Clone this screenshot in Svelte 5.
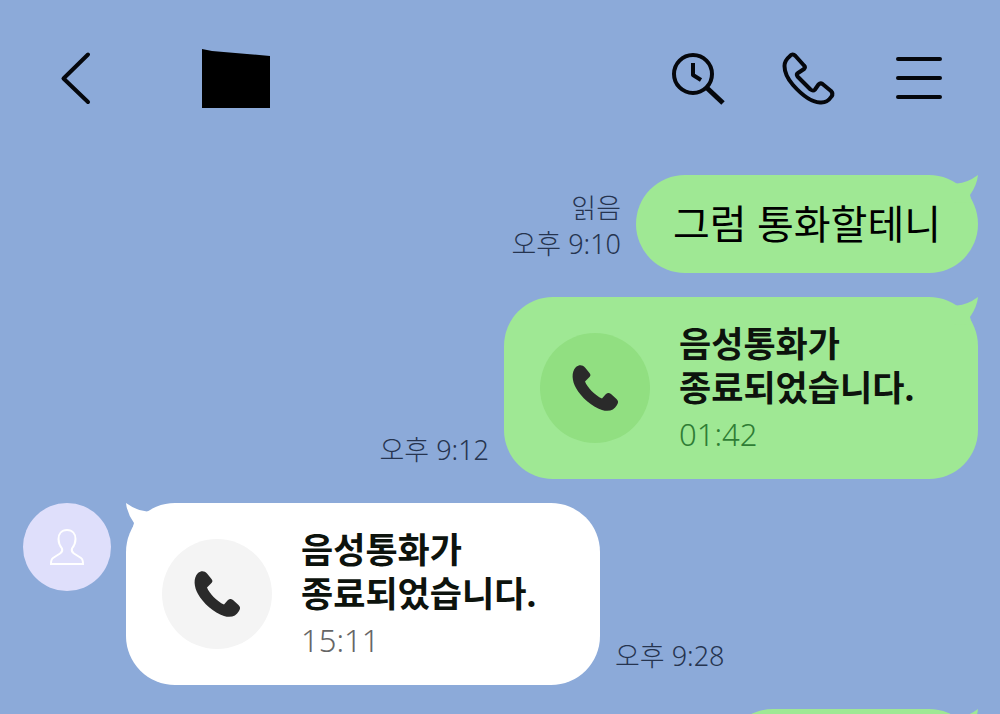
<script>
  const messages = [
    { id: 1, mine: true, kind: "text", text: "그럼 통화할테니", read: true, time: "오후 9:10" },
    { id: 2, mine: true, kind: "call", duration: "01:42", time: "오후 9:12" },
    { id: 3, mine: false, kind: "call", duration: "15:11", time: "오후 9:28" },
    { id: 4, mine: true, kind: "text", text: "", time: "" },
  ];
</script>

<div class="chat">
  <header>
    <button class="back" aria-label="뒤로">
      <svg width="32" height="56" viewBox="0 0 32 56">
        <path d="M28 4.500L3.500 28.500L28 52" />
      </svg>
    </button>
    <!-- the contact name is blacked out -->
    <svg class="redacted" width="69" height="59" viewBox="0 0 69 59" aria-hidden="true">
      <path d="M1 0L11 2L46 5L69 7V59H1Z" />
    </svg>
    <nav>
      <button aria-label="검색">
        <svg width="56" height="56" viewBox="0 0 56 56">
          <circle cx="22" cy="24" r="19" />
          <path d="M36 38L52 53" stroke-width="5" stroke-linecap="butt" />
          <path d="M22 13V25L30 30" stroke-width="4" stroke-linecap="butt" />
        </svg>
      </button>
      <button aria-label="통화">
        <svg width="56" height="56" viewBox="0 0 56 56">
          <path
            d="M8.500 6.500C10.500 4 12.500 4 14.500 6L23 15.500C24.500 17 24 18 23 19L17 23C15.500 24 15.500 25 16.500 26.500L29.500 39.500C31.500 41 32.500 41 34 39.500L37.500 34.500C39 33 40 33 41.500 34L50 41C52 43 52 44.500 50.500 46.500C47.500 51 44 53 39 52.500C30 52 20 44 12 35C6 28 3.500 22 3.500 16C3.500 12 5.500 9 8.500 6.500Z"
          />
        </svg>
      </button>
      <button aria-label="메뉴">
        <svg width="56" height="56" viewBox="0 0 56 56">
          <path d="M7 9H49M7 28H49M7 47H49" />
        </svg>
      </button>
    </nav>
  </header>

  <main>
    {#each messages as m (m.id)}
      <div class="row" class:mine={m.mine}>
        {#if !m.mine}
          <div class="avatar">
            <svg width="36" height="38" viewBox="0 0 36 38" aria-hidden="true">
              <path
                d="M18 2C12.500 2 9.500 6 9.500 11C9.500 16 11 18 13 20.500C14 23 13 24 11 25.500L4 30C2.500 31 2 32 2 36H34C34 32 33.500 31 32 30L25 25.500C23 24 22 23 23 20.500C25 18 26.500 16 26.500 11C26.500 6 23.500 2 18 2Z"
              />
            </svg>
          </div>
        {/if}
        <div class="bubble {m.kind}">
          <svg class="tail" width="24" height="28" viewBox="0 0 24 28" aria-hidden="true">
            <path d="M0 8L3 8.500Q13 8 24 0Q23 10 16 20L18 27L0 28Z" />
          </svg>
          {#if m.kind === "call"}
            <div class="disc">
              <svg width="48" height="48" viewBox="0 0 48 48" aria-hidden="true">
                <path
                  d="M5 3C8 0.500 11.500 0.500 14 3.500L18.500 9C20 11 19.500 12 18 13.500L14 17.500C16 23 24 31.500 31 34.500L34.500 30.500C36.500 28.500 38 28.500 40 30L45.500 35C47.500 37 47.500 38.500 46 41C43 46.500 37.500 48 31 46C21 43 10 33 5 24C1 17 0 8 5 3Z"
                />
              </svg>
            </div>
            <div class="call-text">
              <p class="title">음성통화가<br />종료되었습니다.</p>
              <p class="duration">{m.duration}</p>
            </div>
          {:else}
            <p>{m.text}</p>
          {/if}
        </div>
        <div class="meta">
          {#if m.read}<span>읽음</span>{/if}
          <time>{m.time}</time>
        </div>
      </div>
    {/each}
  </main>
</div>

<style>
  :global(body) {
    margin: 0;
  }
  .chat {
    --mine: #9fe894;
    height: 100vh;
    overflow: hidden;
    background: #8caad9;
    color: #0d130d;
    font-family: "Noto Sans", "Noto Sans CJK KR", sans-serif;
  }
  p {
    margin: 0;
  }
  svg {
    display: block;
    flex: none;
  }

  header {
    display: flex;
    align-items: center;
    box-sizing: border-box;
    height: 156px;
    padding: 0 53px 0 60px;
  }
  button {
    padding: 0;
    border: 0;
    background: none;
    cursor: pointer;
  }
  button svg {
    fill: none;
    stroke: #05070c;
    stroke-width: 4;
    stroke-linecap: round;
    stroke-linejoin: round;
  }
  .redacted {
    margin-left: 109px;
  }
  nav {
    display: flex;
    gap: 54px;
    margin-left: auto;
  }

  main {
    display: flex;
    flex-direction: column;
    gap: 24px;
    padding: 19px 22px 0 23px;
  }
  .row {
    display: flex;
    align-items: flex-start;
  }
  .row.mine {
    flex-direction: row-reverse;
  }
  .avatar {
    display: grid;
    place-items: center;
    flex: none;
    width: 88px;
    height: 88px;
    margin-right: 15px;
    border-radius: 50%;
    background: #dfdffb;
  }
  .avatar path {
    fill: none;
    stroke: #fff;
    stroke-width: 2;
  }

  .bubble {
    --fill: #fff;
    position: relative;
    box-sizing: border-box;
    border-radius: 49px;
    background: var(--fill);
  }
  .mine .bubble {
    --fill: var(--mine);
  }
  .tail {
    position: absolute;
    top: 0;
    left: 0;
    fill: var(--fill);
    transform: scaleX(-1);
  }
  .mine .tail {
    left: auto;
    right: 0;
    transform: none;
  }
  .bubble.text {
    min-width: 254px;
    min-height: 98px;
    padding: 21px 37px;
    color: #000;
    font-size: 40px;
    line-height: 56px;
  }
  .bubble.call {
    display: flex;
    align-items: center;
    gap: 29px;
    min-width: 474px;
    min-height: 182px;
    padding: 20px 36px;
  }
  .disc {
    display: grid;
    place-items: center;
    flex: none;
    width: 110px;
    height: 110px;
    border-radius: 50%;
    background: #f4f4f4;
    fill: #2a2a2a;
  }
  .mine .disc {
    background: #91df81;
  }
  .call-text {
    padding-top: 4px;
  }
  .title {
    font-size: 35px;
    font-weight: 700;
    line-height: 44px;
  }
  .duration {
    color: #666;
    font-size: 31px;
    font-weight: 300;
    line-height: 48px;
  }
  .mine .duration {
    color: #2f7d35;
  }

  .meta {
    display: flex;
    flex-direction: column;
    align-self: flex-end;
    padding: 0 15px 11px;
    color: #26344f;
    font-size: 27px;
    font-weight: 300;
    line-height: 36px;
  }
  .mine .meta {
    align-items: flex-end;
  }
</style>
